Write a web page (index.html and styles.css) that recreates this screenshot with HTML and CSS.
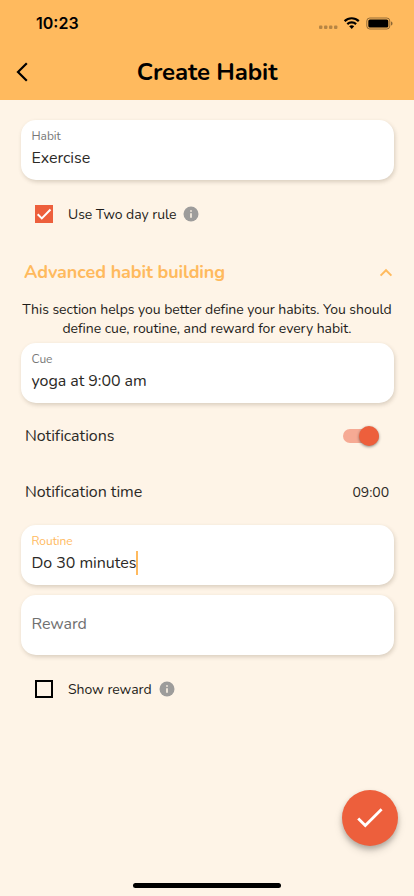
FILE: index.html
```html
<!DOCTYPE html>
<html lang="en">
<head>
<meta charset="utf-8">
<meta name="viewport" content="width=device-width, initial-scale=1">
<title>Create Habit</title>
<link rel="stylesheet" href="styles.css">
</head>
<body>
<div class="screen">
  <header class="header">
    <div class="status">
      <span class="time">10:23</span>
      <svg class="status-icons" width="76" height="16" viewBox="0 0 76 16">
        <g fill="#000" opacity=".28"><rect x="1" y="10.5" width="3.4" height="3.4" rx="1"/><rect x="6" y="10.5" width="3.4" height="3.4" rx="1"/><rect x="11" y="10.5" width="3.4" height="3.4" rx="1"/><rect x="16" y="10.5" width="3.4" height="3.4" rx="1"/></g>
        <g fill="none" stroke="#000" stroke-width="2.2"><path d="M26.6 6.1a10.3 10.3 0 0 1 14.2 0"/><path d="M29.3 9.1a6.4 6.4 0 0 1 8.8 0"/></g>
        <path d="M31.2 11.3a3.9 3.9 0 0 1 5 0l-2.5 2.6z"/>
        <rect x="48.8" y="3" width="23" height="11" rx="3" fill="none" stroke="#000" stroke-opacity=".42"/>
        <rect x="50.3" y="4.5" width="20" height="8" rx="1.6"/>
        <path d="M73 6.5c2 .6 2 3.4 0 4z" opacity=".45"/>
      </svg>
    </div>
    <div class="bar">
      <svg class="back" width="14" height="20" viewBox="0 0 14 20"><path d="M11.8 1.3 3 10l8.8 8.7" fill="none" stroke="#000" stroke-width="2.2"/></svg>
      <h1 class="title">Create Habit</h1>
    </div>
  </header>
  <main class="form">
    <div class="field"><span class="label">Habit</span><span class="value">Exercise</span></div>
    <div class="check-row">
      <svg width="18" height="18" viewBox="0 0 18 18"><path d="M0 0h18v18H0z" fill="#ed5f3c"/><path d="m2.7 9.3 4.1 4.1 8.7-8.9" fill="none" stroke="#fff" stroke-width="2"/></svg>
      <span class="check-text">Use Two day rule</span>
      <svg class="info" width="16" height="16" viewBox="0 0 16 16"><circle cx="8" cy="8" r="7.5" fill="#9d9c9b"/><path d="M7.2 4.2h1.6v1.6H7.2zM7.2 7.2h1.6v4.6H7.2z" fill="#fef4e7"/></svg>
    </div>
    <div class="section-head">
      <h2 class="section-title">Advanced habit building</h2>
      <svg width="14" height="9" viewBox="0 0 14 9"><path d="m1.6 7.6 5.4-5.4 5.4 5.4" fill="none" stroke="#ffba5e" stroke-width="2"/></svg>
    </div>
    <p class="description">This section helps you better define your habits. You should<br>define cue, routine, and reward for every habit.</p>
    <div class="field"><span class="label">Cue</span><span class="value">yoga at 9:00 am</span></div>
    <div class="settings">
      <div class="setting"><span>Notifications</span><span class="switch"><span class="knob"></span></span></div>
      <div class="setting"><span>Notification time</span><span class="setting-time">09:00</span></div>
    </div>
    <div class="field"><span class="label label-active">Routine</span><span class="value">Do 30 minutes<i class="caret"></i></span></div>
    <div class="field field-empty"><span class="placeholder">Reward</span></div>
    <div class="check-row">
      <svg width="18" height="18" viewBox="0 0 18 18"><path d="M1 1h16v16H1z" fill="none" stroke="#000" stroke-width="2"/></svg>
      <span class="check-text">Show reward</span>
      <svg class="info" width="16" height="16" viewBox="0 0 16 16"><circle cx="8" cy="8" r="7.5" fill="#9d9c9b"/><path d="M7.2 4.2h1.6v1.6H7.2zM7.2 7.2h1.6v4.6H7.2z" fill="#fef4e7"/></svg>
    </div>
  </main>
  <div class="fab"><svg width="28" height="22" viewBox="0 0 28 22"><path d="m2.2 11.5 7.1 7.1L25.6 2.3" fill="none" stroke="#fff" stroke-width="2.8"/></svg></div>
  <div class="home"></div>
</div>
</body>
</html>
```
FILE: styles.css
```css
* { box-sizing: border-box; }
body { margin: 0; font-family: Nunito, Lato, sans-serif; letter-spacing: -.05px; color: #2b2926; }
.screen { position: relative; width: 414px; height: 896px; overflow: hidden; background: #fef4e7; }
.header { height: 100px; background: #ffba5e; color: #000; }
.status { display: flex; justify-content: space-between; align-items: center; height: 44px; padding: 2px 20px 0 36px; }
.time { font: 600 16px/20px Inter, sans-serif; letter-spacing: 0; }
.status-icons { margin-top: -1px; }
.bar { display: grid; grid-template-columns: 40px 1fr 40px; align-items: center; height: 56px; }
.back { margin-left: 15px; }
.title { margin: 0; font-size: 24px; line-height: 32px; font-weight: 700; text-align: center; white-space: nowrap; letter-spacing: -.1px; }
.form { padding: 20px 20px 0; }
.field { display: flex; flex-direction: column; height: 60px; margin-left: .5px; padding: 8px 11px; border-radius: 15px; background: #fff; box-shadow: 1px 2px 4px rgba(70, 55, 30, .2); white-space: nowrap; }
.label { font-size: 12px; line-height: 16px; color: #777; }
.label-active { color: #ffba5e; }
.value { display: flex; align-items: center; margin-top: 2px; font-size: 16px; line-height: 24px; }
.field-empty { justify-content: center; margin-top: 10px; padding-bottom: 11px; }
.placeholder { font-size: 16px; line-height: 24px; color: #707070; }
.caret { width: 2px; height: 24px; margin-left: -.5px; background: #ffba5e; }
.check-row { display: flex; align-items: center; height: 68px; padding-left: 15px; white-space: nowrap; }
.check-text { margin-left: 15px; padding-top: 1px; font-size: 14px; line-height: 20px; color: #1f1d1a; }
.info { margin-left: 7px; }
.section-head { display: flex; align-items: center; justify-content: space-between; height: 48px; padding: 0 1px 0 4px; }
.section-title { margin: 0; font-size: 18px; line-height: 24px; font-weight: 700; letter-spacing: -.1px; color: #ffba5e; white-space: nowrap; }
.description { margin: 4px 0 5px; font-size: 14px; line-height: 19px; text-align: center; white-space: nowrap; color: #1f1d1a; }
.settings { padding: 5px; }
.setting { display: flex; align-items: center; justify-content: space-between; height: 56px; font-size: 16px; }
.switch { display: flex; align-items: center; justify-content: flex-end; width: 36px; height: 14px; margin-right: 10px; border-radius: 7px; background: #f6aa94; }
.knob { flex: none; width: 20px; height: 20px; border-radius: 50%; background: #ed5f3c; box-shadow: 0 1px 3px rgba(0, 0, 0, .45); }
.setting-time { font-size: 14px; }
.fab { position: absolute; right: 16px; bottom: 50px; display: flex; align-items: center; justify-content: center; width: 56px; height: 56px; border-radius: 50%; background: #ed5f3c; box-shadow: 0 3px 5px rgba(0, 0, 0, .2), 0 5px 9px rgba(0, 0, 0, .15); }
.home { position: absolute; left: 133px; bottom: 8px; width: 148px; height: 5px; border-radius: 3px; background: #000; }
```
